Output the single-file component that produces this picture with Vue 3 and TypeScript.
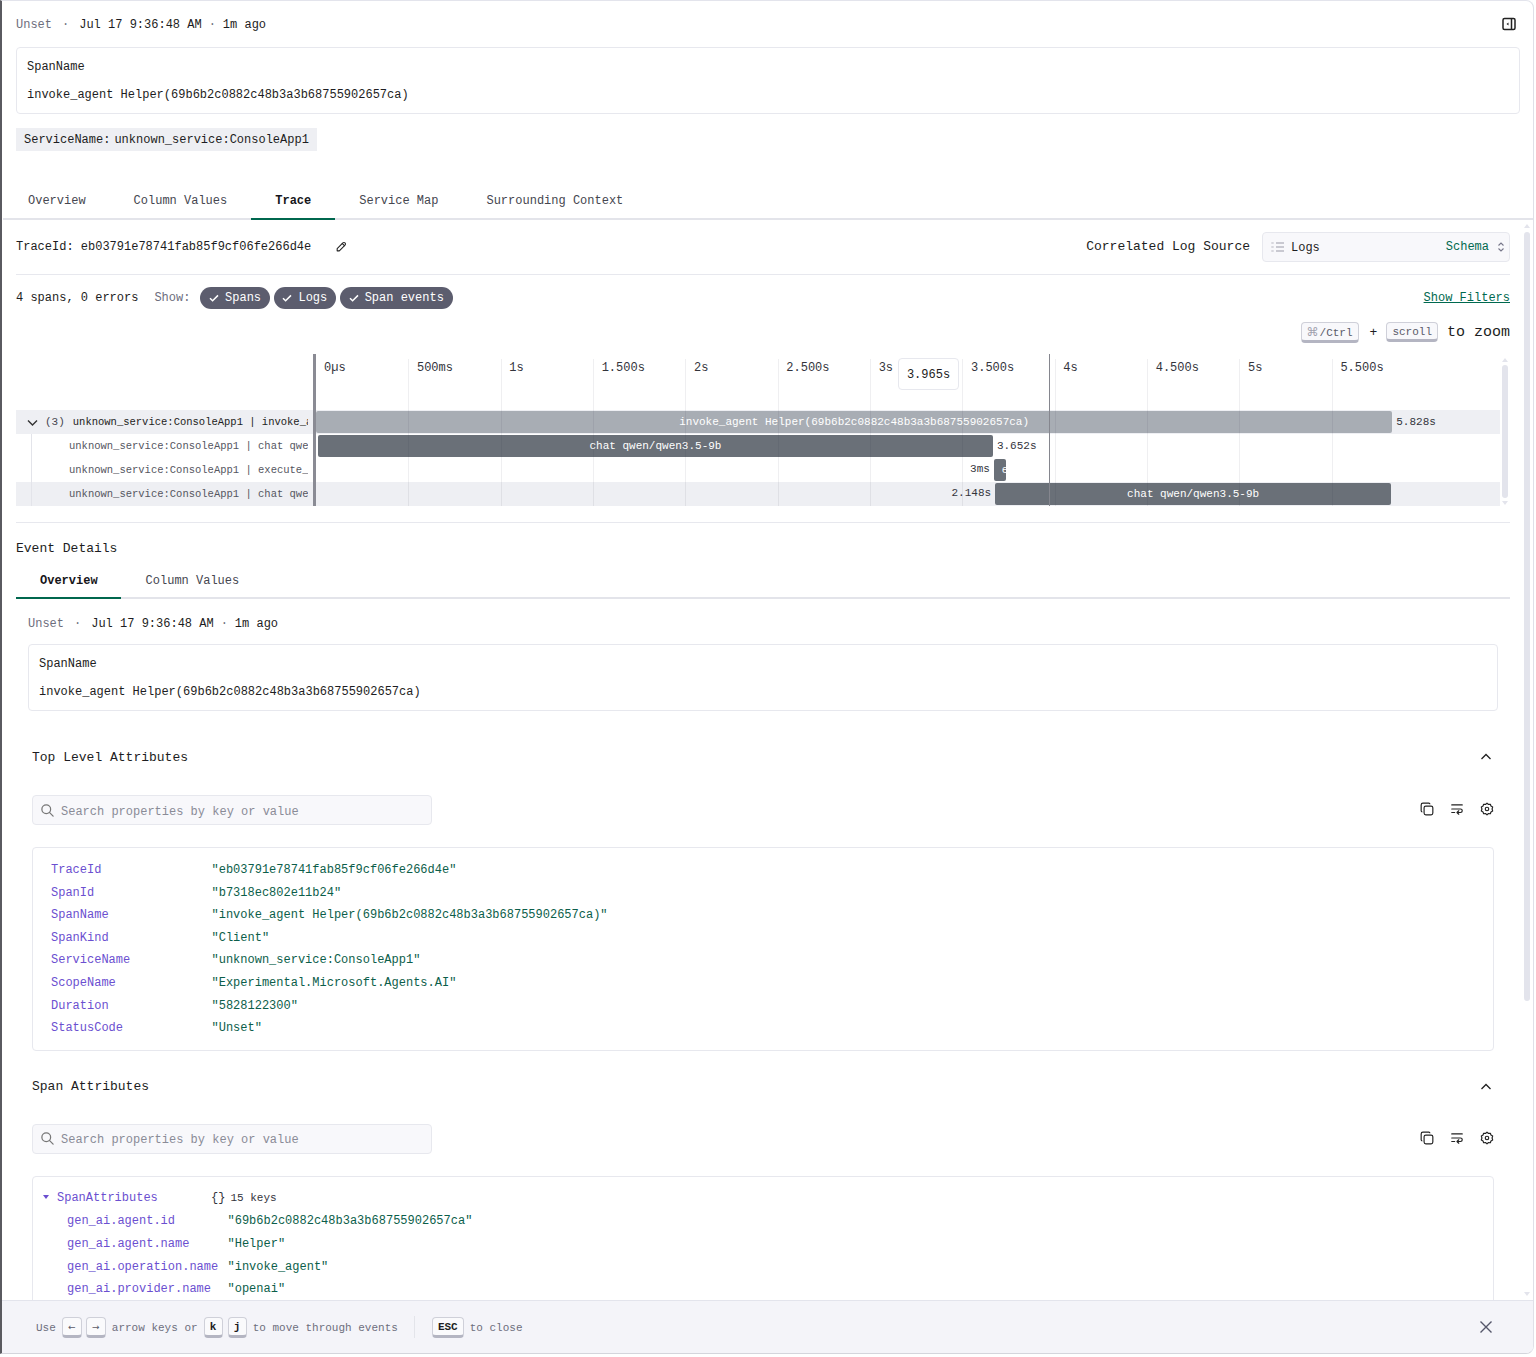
<script setup lang="ts">
const topAttrs: [string, string][] = [
  ['TraceId', '"eb03791e78741fab85f9cf06fe266d4e"'],
  ['SpanId', '"b7318ec802e11b24"'],
  ['SpanName', '"invoke_agent Helper(69b6b2c0882c48b3a3b68755902657ca)"'],
  ['SpanKind', '"Client"'],
  ['ServiceName', '"unknown_service:ConsoleApp1"'],
  ['ScopeName', '"Experimental.Microsoft.Agents.AI"'],
  ['Duration', '"5828122300"'],
  ['StatusCode', '"Unset"'],
]

const spanAttrs: [string, string][] = [
  ['gen_ai.agent.id', '"69b6b2c0882c48b3a3b68755902657ca"'],
  ['gen_ai.agent.name', '"Helper"'],
  ['gen_ai.operation.name', '"invoke_agent"'],
  ['gen_ai.provider.name', '"openai"'],
]

const ticks = ['0µs', '500ms', '1s', '1.500s', '2s', '2.500s', '3s', '3.500s', '4s', '4.500s', '5s', '5.500s']

// px per second on the time axis
const scale = 184.8

interface Span {
  label: string
  start: number
  dur: number
  text: string
  time: string
  timeLeft?: boolean
  root?: boolean
  shaded?: boolean
}

const spans: Span[] = [
  { label: 'unknown_service:ConsoleApp1 | invoke_agent Helper', start: 0, dur: 5.824, text: 'invoke_agent Helper(69b6b2c0882c48b3a3b68755902657ca)', time: '5.828s', root: true, shaded: true },
  { label: 'unknown_service:ConsoleApp1 | chat qwen/qwen3.5-9b', start: 0.011, dur: 3.652, text: 'chat qwen/qwen3.5-9b', time: '3.652s' },
  { label: 'unknown_service:ConsoleApp1 | execute_tool', start: 3.668, dur: 0.065, text: 'execute_tool', time: '3ms', timeLeft: true },
  { label: 'unknown_service:ConsoleApp1 | chat qwen/qwen3.5-9b', start: 3.675, dur: 2.143, text: 'chat qwen/qwen3.5-9b', time: '2.148s', timeLeft: true, shaded: true },
]

function barStyle(s: Span) {
  return { width: s.dur * scale + 'px' }
}
function offsetStyle(s: Span) {
  return { width: s.start * scale + 'px' }
}
</script>

<template>
  <div class="page">
    <div class="panel">
      <header class="head">
        <div class="meta-row">
          <div class="meta"><span class="muted">Unset</span><span class="dot">·</span>Jul 17 9:36:48 AM<span class="dot dot-2">·</span>1m ago</div>
          <svg class="collapse" width="14" height="14" viewBox="0 0 14 14" fill="none" stroke="#222" stroke-width="1.5">
            <rect x="1" y="1.500" width="12" height="11" rx="1.500" />
            <path d="M9.500 1.500v11" />
            <path d="M6.500 5.500v3L4.500 7z" fill="#222" stroke="none" />
          </svg>
        </div>
        <div class="name-card">
          <div>SpanName</div>
          <div class="name-val">invoke_agent Helper(69b6b2c0882c48b3a3b68755902657ca)</div>
        </div>
        <div class="svc-row"><span class="svc"><span class="svc-key">ServiceName:</span>unknown_service:ConsoleApp1</span></div>
        <nav class="tabs main-tabs">
          <span class="tab">Overview</span>
          <span class="tab">Column Values</span>
          <span class="tab active">Trace</span>
          <span class="tab">Service Map</span>
          <span class="tab">Surrounding Context</span>
        </nav>
      </header>

      <div class="body">
        <main class="scroll">
          <div class="trace-row">
            <div class="trace-id">
              <span>TraceId: eb03791e78741fab85f9cf06fe266d4e</span>
              <svg class="pencil" width="13" height="13" viewBox="0 0 24 24" fill="none" stroke="#222" stroke-width="2" stroke-linecap="round" stroke-linejoin="round">
                <path d="M4 20h4L18.500 9.500a2.800 2.800 0 0 0-4-4L4 16v4" />
                <path d="M13.500 6.500l4 4" />
              </svg>
            </div>
            <div class="source">
              <span class="source-label">Correlated Log Source</span>
              <div class="select">
                <svg width="13" height="14" viewBox="0 0 13 14" stroke="#9a9aa8" stroke-width="1.200">
                  <path d="M0.500 3h2.500M0.500 7h2.500M0.500 11h2.500" stroke-dasharray="1.200 0.800" />
                  <path d="M5 3h8M5 7h8M5 11h8" />
                </svg>
                <span class="select-val">Logs</span>
                <span class="schema">Schema</span>
                <svg width="8" height="12" viewBox="0 0 8 12" fill="none" stroke="#77778a" stroke-width="1.100">
                  <path d="M1.500 4.500L4 2l2.500 2.500M1.500 7.500L4 10l2.500-2.500" />
                </svg>
              </div>
            </div>
          </div>

          <div class="filter-row">
            <span>4 spans, 0 errors</span>
            <span class="muted show">Show:</span>
            <span v-for="c in ['Spans', 'Logs', 'Span events']" :key="c" class="chip">
              <svg width="10" height="10" viewBox="0 0 10 10" fill="none" stroke="#fff" stroke-width="1.500"><path d="M1 5.200l2.600 2.600L9 2.400" /></svg>
              {{ c }}
            </span>
            <a class="show-filters">Show Filters</a>
          </div>

          <div class="zoom-hint">
            <kbd class="key key-cmd"><span class="cmd">⌘</span>/Ctrl</kbd>
            <span class="plus">+</span>
            <kbd class="key">scroll</kbd>
            <span class="to-zoom">to zoom</span>
          </div>

          <section class="timeline">
            <div class="labels">
              <div class="guide" />
              <div
                v-for="(s, i) in spans"
                :key="i"
                class="label-row"
                :class="{ shaded: s.shaded, root: s.root }"
              >
                <template v-if="s.root">
                  <svg class="row-chevron" width="11" height="11" viewBox="0 0 11 11" fill="none" stroke="#333" stroke-width="1.400"><path d="M1 3.500l4.500 4.500 4.500-4.500" /></svg>
                  <span class="count">(3)</span>
                </template>
                <span class="label-text">{{ s.label }}</span>
              </div>
            </div>
            <div class="chart">
              <div class="ticks">
                <div v-for="t in ticks" :key="t" class="tick">{{ t }}</div>
              </div>
              <div
                v-for="(s, i) in spans"
                :key="i"
                class="bar-row"
                :class="{ shaded: s.shaded }"
              >
                <div class="bar-offset" :style="offsetStyle(s)">
                  <span v-if="s.timeLeft" class="time time-left">{{ s.time }}</span>
                </div>
                <div class="bar" :class="{ light: s.root, tiny: s.dur * scale < 20 }" :style="barStyle(s)">{{ s.text }}</div>
                <span v-if="!s.timeLeft" class="time">{{ s.time }}</span>
              </div>
              <div class="cursor" />
              <div class="cursor-tip">3.965s</div>
            </div>
            <div class="mini-scroll">
              <i class="arrow up" />
              <i class="thumb" />
              <i class="arrow down" />
            </div>
          </section>

          <div class="event-section">
            <h3 class="event-title">Event Details</h3>
            <nav class="tabs sub-tabs">
              <span class="tab active">Overview</span>
              <span class="tab">Column Values</span>
            </nav>
            <div class="event-inner">
              <div class="meta"><span class="muted">Unset</span><span class="dot">·</span>Jul 17 9:36:48 AM<span class="dot dot-2">·</span>1m ago</div>
              <div class="name-card inner-card">
                <div>SpanName</div>
                <div class="name-val">invoke_agent Helper(69b6b2c0882c48b3a3b68755902657ca)</div>
              </div>
            </div>

            <section class="attr-block first">
              <div class="attr-head">
                <span>Top Level Attributes</span>
                <svg width="12" height="12" viewBox="0 0 12 12" fill="none" stroke="#222" stroke-width="1.300"><path d="M1.500 8l4.500-4.500L10.500 8" /></svg>
              </div>
              <div class="attr-tools">
                <div class="search">
                  <svg width="15" height="15" viewBox="0 0 24 24" fill="none" stroke="#777" stroke-width="2" stroke-linecap="round"><circle cx="10" cy="10" r="7" /><path d="M21 21l-6-6" /></svg>
                  <span class="search-text">Search properties by key or value</span>
                </div>
                <div class="tool-icons">
                  <svg width="14" height="14" viewBox="0 0 24 24" fill="none" stroke="#222" stroke-width="2" stroke-linejoin="round"><rect x="7" y="7" width="15" height="15" rx="3" /><path d="M4 17a2 2 0 0 1-2-2V5a3 3 0 0 1 3-3h10a2 2 0 0 1 2 2" /></svg>
                  <svg width="14" height="14" viewBox="0 0 24 24" fill="none" stroke="#222" stroke-width="2" stroke-linecap="round" stroke-linejoin="round"><path d="M3 5h18M3 12h15a3 3 0 0 1 0 6h-5M3 18h5" /><path d="M15 15l-3 3 3 3" /></svg>
                  <svg width="14" height="14" viewBox="0 0 24 24" fill="none" stroke="#222" stroke-width="2" stroke-linejoin="round"><path d="M12 2l2.500 2.200 3.300-.3 1 3.100 2.900 1.700-1 3.300 1 3.300-2.900 1.700-1 3.100-3.300-.3L12 22l-2.500-2.200-3.300.3-1-3.100-2.900-1.700 1-3.300-1-3.300L5.200 7l1-3.100 3.300.3z" /><circle cx="12" cy="12" r="3" /></svg>
                </div>
              </div>
              <div class="attr-card top-card">
                <div v-for="[k, v] in topAttrs" :key="k" class="attr-row">
                  <span class="k">{{ k }}</span>
                  <span class="v">{{ v }}</span>
                </div>
              </div>
            </section>

            <section class="attr-block">
              <div class="attr-head">
                <span>Span Attributes</span>
                <svg width="12" height="12" viewBox="0 0 12 12" fill="none" stroke="#222" stroke-width="1.300"><path d="M1.500 8l4.500-4.500L10.500 8" /></svg>
              </div>
              <div class="attr-tools">
                <div class="search">
                  <svg width="15" height="15" viewBox="0 0 24 24" fill="none" stroke="#777" stroke-width="2" stroke-linecap="round"><circle cx="10" cy="10" r="7" /><path d="M21 21l-6-6" /></svg>
                  <span class="search-text">Search properties by key or value</span>
                </div>
                <div class="tool-icons">
                  <svg width="14" height="14" viewBox="0 0 24 24" fill="none" stroke="#222" stroke-width="2" stroke-linejoin="round"><rect x="7" y="7" width="15" height="15" rx="3" /><path d="M4 17a2 2 0 0 1-2-2V5a3 3 0 0 1 3-3h10a2 2 0 0 1 2 2" /></svg>
                  <svg width="14" height="14" viewBox="0 0 24 24" fill="none" stroke="#222" stroke-width="2" stroke-linecap="round" stroke-linejoin="round"><path d="M3 5h18M3 12h15a3 3 0 0 1 0 6h-5M3 18h5" /><path d="M15 15l-3 3 3 3" /></svg>
                  <svg width="14" height="14" viewBox="0 0 24 24" fill="none" stroke="#222" stroke-width="2" stroke-linejoin="round"><path d="M12 2l2.500 2.200 3.300-.3 1 3.100 2.900 1.700-1 3.300 1 3.300-2.900 1.700-1 3.100-3.300-.3L12 22l-2.500-2.200-3.300.3-1-3.100-2.900-1.700 1-3.300-1-3.300L5.200 7l1-3.100 3.300.3z" /><circle cx="12" cy="12" r="3" /></svg>
                </div>
              </div>
              <div class="attr-card span-card">
                <div class="attr-row parent">
                  <span class="k"><i class="caret" />SpanAttributes</span>
                  <span class="keys"><span class="braces">{}</span>15 keys</span>
                </div>
                <div v-for="[k, v] in spanAttrs" :key="k" class="attr-row nested">
                  <span class="k">{{ k }}</span>
                  <span class="v">{{ v }}</span>
                </div>
              </div>
            </section>
          </div>
        </main>
        <div class="scrollbar">
          <i class="arrow up" />
          <i class="thumb" />
          <i class="arrow down push" />
        </div>
      </div>

      <footer class="foot">
        <span class="foot-text">Use</span>
        <span class="keys-pair"><kbd class="key arrow-key">←</kbd><kbd class="key arrow-key">→</kbd></span>
        <span class="foot-text">arrow keys or</span>
        <span class="keys-pair wide"><kbd class="key strong">k</kbd><kbd class="key strong">j</kbd></span>
        <span class="foot-text">to move through events</span>
        <i class="foot-sep" />
        <kbd class="key strong">ESC</kbd>
        <span class="foot-text">to close</span>
        <svg class="close" width="14" height="14" viewBox="0 0 14 14" fill="none" stroke="#55566a" stroke-width="1.400"><path d="M1.500 1.500l11 11M12.500 1.500l-11 11" /></svg>
      </footer>
    </div>
  </div>
</template>

<style>
html, body { margin: 0; background: #fff; overflow: hidden; }
</style>

<style scoped>
.page {
  width: 1536px;
  height: 1357px;
  overflow: hidden;
  font-family: "Liberation Mono", monospace;
  font-size: 12px;
  color: #1d1d22;
  background: #fff;
}
.panel {
  width: 1534px;
  height: 1354px;
  box-sizing: border-box;
  display: flex;
  flex-direction: column;
  border-left: 2px solid #5a5a60;
  border-top: 1px solid #e3e4ec;
  border-right: 1px solid #dfe0e8;
  border-bottom: 1px solid #d4d5dc;
  border-radius: 0 8px 8px 0;
  overflow: hidden;
}
.muted { color: #6d6e7d; }
.meta { padding-top: 2px; }
.dot { margin: 0 10px; color: #6d6e7d; }
.dot.dot-2 { margin: 0 7px; }

.head { flex: none; padding-left: 1px; }
.meta-row {
  display: flex;
  justify-content: space-between;
  align-items: center;
  height: 46px;
  padding: 0 17px 0 13px;
}
.name-card {
  margin: 0 13px;
  height: 67px;
  box-sizing: border-box;
  padding: 12px 10px;
  border: 1px solid #e7e8ee;
  border-radius: 4px;
  line-height: 14px;
}
.name-val { margin-top: 14px; }
.svc-row { padding: 14px 13px 0; height: 23px; }
.svc {
  display: inline-block;
  height: 23px;
  line-height: 25px;
  padding: 0 8px;
  background: #eeeff3;
}
.svc-key { margin-right: 4px; }
.tabs { display: flex; }
.main-tabs {
  margin-top: 34px;
  padding-left: 1px;
  border-bottom: 2px solid #e3e4ea;
  height: 33px;
  box-sizing: content-box;
}
.tab {
  padding: 0 24px;
  line-height: 33px;
  height: 33px;
  margin-bottom: -2px;
  color: #45464f;
  box-sizing: content-box;
}
.tab.active {
  color: #16161a;
  font-weight: 700;
  border-bottom: 2px solid #00674e;
}

.body { flex: 1; min-height: 0; display: flex; }
.scroll {
  flex: 1;
  min-width: 0;
  overflow: hidden;
  padding: 0 12px 0 14px;
}
.scrollbar {
  flex: none;
  width: 10px;
  margin-right: 1px;
  display: flex;
  flex-direction: column;
  align-items: center;
  padding-top: 4px;
}
.scrollbar .thumb, .mini-scroll .thumb {
  display: block;
  width: 6px;
  border-radius: 3px;
  background: #e3e4ec;
}
.scrollbar .thumb { height: 769px; margin-top: 4px; }
.arrow {
  display: block;
  width: 0;
  height: 0;
  border-left: 3px solid transparent;
  border-right: 3px solid transparent;
}
.arrow.up { border-bottom: 4px solid #e3e4ec; }
.arrow.down { border-top: 4px solid #e3e4ec; }
.arrow.push { margin-top: auto; margin-bottom: 4px; }

.trace-row {
  display: flex;
  justify-content: space-between;
  align-items: center;
  height: 54px;
  border-bottom: 1px solid #e7e8ee;
}
.trace-id { display: flex; align-items: center; gap: 24px; }
.pencil { margin-bottom: 1px; }
.source { display: flex; align-items: center; gap: 12px; }
.source-label { font-size: 13px; padding-bottom: 2px; }
.select {
  width: 248px;
  height: 30px;
  box-sizing: border-box;
  display: flex;
  align-items: center;
  gap: 7px;
  padding: 0 4px 0 8px;
  background: #f8f8fb;
  border: 1px solid #e7e8ee;
  border-radius: 4px;
}
.select-val { flex: 1; padding-top: 2px; }
.schema { color: #00694f; margin-right: 1px; }

.filter-row {
  display: flex;
  align-items: center;
  height: 45px;
  gap: 4px;
}
.show { margin: 0 6px 0 12px; }
.chip {
  display: inline-flex;
  align-items: center;
  gap: 6px;
  height: 22px;
  padding: 1px 8.8px 0 8.6px;
  box-sizing: border-box;
  border-radius: 11px;
  background: #5c5d6e;
  color: #fff;
}
.show-filters {
  margin-left: auto;
  color: #00694f;
  text-decoration: underline;
}

.zoom-hint {
  display: flex;
  justify-content: flex-end;
  align-items: center;
  gap: 9px;
  height: 24px;
}
.plus { font-size: 13px; }
.to-zoom { font-size: 15px; }
.key {
  display: inline-block;
  font-family: inherit;
  font-size: 11px;
  line-height: 14px;
  padding: 2px 5px 0;
  border: 1px solid #cfd0d9;
  border-bottom: 3px solid #b4b5c2;
  border-radius: 4px;
  background: #f8f8fb;
  color: #5a5b69;
}
.key-cmd { margin-right: 2px; }
.cmd {
  color: #9fa0ad;
  font-family: "DejaVu Sans", sans-serif;
  font-size: 12px;
  margin-right: 1px;
}
.key.strong { color: #1d1d22; font-weight: 700; }

.timeline {
  position: relative;
  display: flex;
  margin-top: 10px;
  height: 152px;
  padding-bottom: 16px;
  border-bottom: 1px solid #e7e8ee;
}
.labels {
  position: relative;
  flex: none;
  width: 297px;
  box-sizing: content-box;
  padding-top: 56px;
  height: 96px;
  border-right: 3px solid #8a8b94;
}
.guide {
  position: absolute;
  left: 15px;
  top: 80px;
  bottom: 0;
  border-left: 1px solid #e3e4ea;
}
.label-row {
  display: flex;
  align-items: center;
  height: 24px;
  padding: 0 5px 0 53px;
  color: #55565f;
  font-size: 10.5px;
}
.label-row.root {
  padding-left: 11px;
  color: #1d1d22;
}
.row-chevron { flex: none; }
.label-row.shaded, .bar-row.shaded { background: #eeeff3; }
.count { margin: 0 8px 0 7px; font-size: 11px; color: #45464f; }
.label-text {
  overflow: hidden;
  white-space: nowrap;
  min-width: 0;
}

.chart {
  position: relative;
  flex: none;
  width: 1184px;
  padding-top: 56px;
  height: 96px;
}
.ticks {
  position: absolute;
  left: 0;
  top: 5px;
  bottom: 0;
  display: flex;
  pointer-events: none;
}
.tick {
  flex: none;
  width: 92.35px;
  box-sizing: border-box;
  padding: 2px 0 0 7.6px;
  line-height: 14px;
  color: #33343c;
  border-left: 1px solid rgba(30, 30, 60, 0.07);
}
.tick:first-child { border-left: none; padding-left: 8px; }
.bar-row {
  display: flex;
  align-items: center;
  height: 24px;
  white-space: nowrap;
}
.bar-offset {
  flex: none;
  position: relative;
  height: 100%;
}
.bar {
  flex: none;
  height: 22px;
  box-sizing: border-box;
  padding: 0 8px;
  line-height: 22px;
  border-radius: 2px;
  background: #6a7078;
  color: #fff;
  font-size: 11px;
  text-align: center;
  overflow: hidden;
}
.bar.light { background: #a8adb4; }
.bar.tiny { padding: 0 0 0 8px; text-align: left; }
.time { font-size: 11px; margin-left: 4px; color: #33343c; }
.time-left {
  position: absolute;
  right: 4px;
  top: 5px;
  margin: 0;
}
.cursor {
  position: absolute;
  left: 733px;
  top: 0;
  bottom: 0;
  border-left: 1px solid #85868e;
}
.cursor-tip {
  position: absolute;
  left: 582px;
  top: 4px;
  width: 61px;
  height: 32px;
  box-sizing: border-box;
  text-align: center;
  line-height: 33px;
  background: #fff;
  border: 1px solid #e7e8ee;
  border-radius: 4px;
}
.mini-scroll {
  position: absolute;
  right: 2px;
  top: 4px;
  bottom: 17px;
  width: 6px;
  display: flex;
  flex-direction: column;
  align-items: center;
  justify-content: space-between;
}
.mini-scroll .thumb { flex: 1; margin: 3px 0; }

.event-section { padding-top: 18px; }
.event-title {
  margin: 0;
  font-size: 13px;
  font-weight: 400;
  line-height: 16px;
}
.sub-tabs {
  margin-top: 7px;
  height: 33px;
  border-bottom: 2px solid #e3e4ea;
}
.sub-tabs .tab { line-height: 35px; }
.sub-tabs .tab.active { padding-right: 23.4px; margin-right: 0.6px; }
.event-inner { padding: 16px 12px 0; }
.inner-card { margin: 13px 0 0; }

.attr-block { padding: 0 16px; }
.attr-block.first { margin-top: 38px; }
.attr-block:not(.first) { margin-top: 28px; }
.attr-head {
  display: flex;
  justify-content: space-between;
  align-items: center;
  height: 16px;
  font-size: 13px;
  padding-right: 2px;
}
.attr-tools {
  display: flex;
  justify-content: space-between;
  align-items: center;
  margin-top: 30px;
}
.attr-block:not(.first) .attr-tools { margin-top: 29px; }
.search {
  width: 400px;
  height: 30px;
  box-sizing: border-box;
  display: flex;
  align-items: center;
  gap: 6px;
  padding: 0 7px;
  background: #f8f8fb;
  border: 1px solid #e7e8ee;
  border-radius: 4px;
  color: #8a8b97;
}
.search-text { padding-top: 3px; }
.tool-icons {
  display: flex;
  gap: 16px;
  margin-bottom: 2px;
}
.attr-card {
  margin-top: 22px;
  padding: 10px 18px 11px;
  border: 1px solid #e7e8ee;
  border-radius: 4px;
}
.top-card { padding-top: 11px; padding-bottom: 10px; }
.span-card { padding-left: 9px; height: 400px; }
.attr-row {
  display: flex;
  line-height: 22.6px;
}
.k { color: #6b4fd0; flex: none; width: 160.5px; white-space: nowrap; }
.v { color: #0c5e4a; white-space: nowrap; }
.nested { padding-left: 25px; }
.parent { margin-bottom: 1px; }
.parent .k { width: 169px; }
.keys { font-size: 11px; color: #33343c; }
.braces { margin-right: 5px; font-size: 12px; }
.caret {
  display: inline-block;
  width: 0;
  height: 0;
  margin: 0 8px 2px 1px;
  border-left: 3px solid transparent;
  border-right: 3px solid transparent;
  border-top: 4px solid #6b4fd0;
}

.foot {
  flex: none;
  height: 53px;
  box-sizing: border-box;
  display: flex;
  align-items: center;
  gap: 6px;
  padding: 0 40px 0 34px;
  background: #f4f4f9;
  border-top: 1px solid #e3e4ec;
  font-size: 11px;
  color: #6d6e7d;
}
.foot-text { padding-top: 2px; }
.keys-pair { display: inline-flex; gap: 4px; }
.keys-pair.wide { gap: 5px; }
.foot .key {
  min-width: 19px;
  box-sizing: border-box;
  text-align: center;
  padding: 1px 5px 0;
  line-height: 16px;
  background: #fafafc;
}
.foot .arrow-key {
  min-width: 20px;
  font-family: "DejaVu Sans", sans-serif;
  font-size: 9px;
}
.foot-sep {
  height: 22px;
  margin: 0 11px 0 10px;
  border-left: 1px solid #e3e4ea;
}
.close { margin-left: auto; }
</style>
